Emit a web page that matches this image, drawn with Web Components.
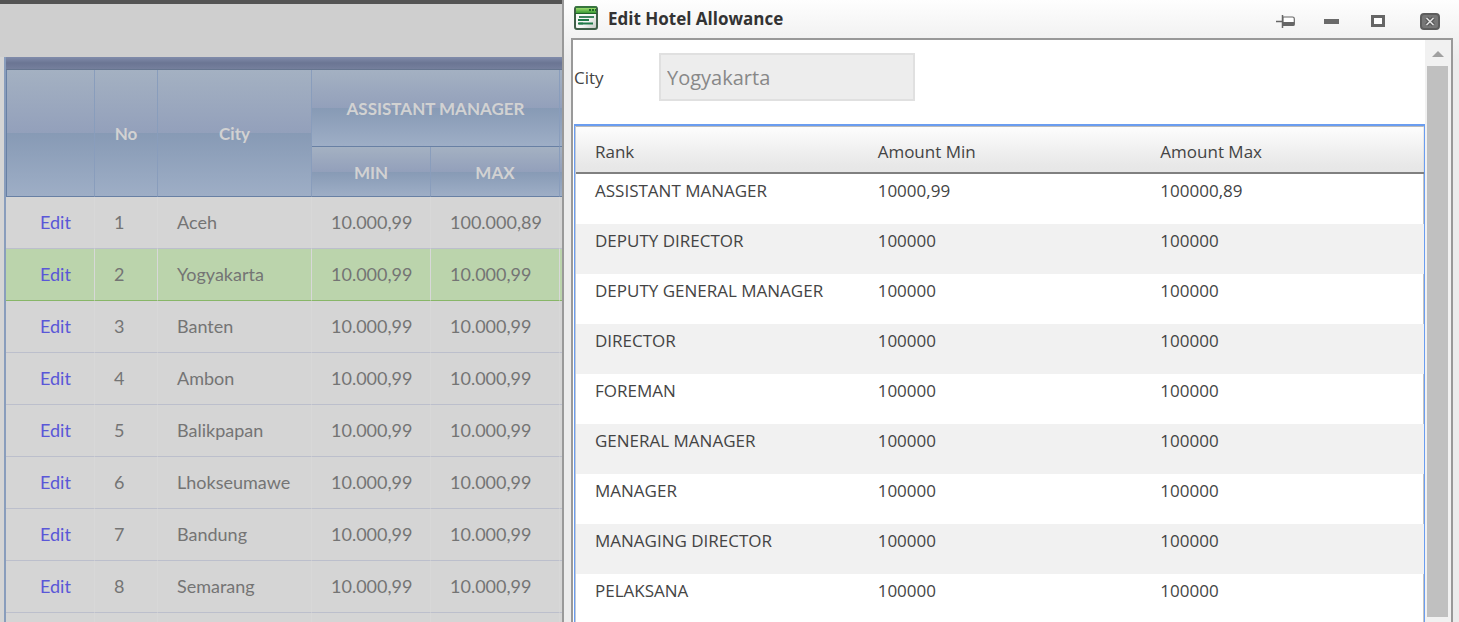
<!DOCTYPE html>
<html lang="en">
<head>
<meta charset="utf-8">
<title>Edit Hotel Allowance</title>
<style>
  html, body { margin: 0; height: 100%; overflow: hidden; }
  body { background: #cfcfcf; }
</style>
</head>
<body>
<hotel-app></hotel-app>

<template id="app-tpl">
  <style>
    :host { display: grid; grid-template-columns: minmax(0, 562fr) minmax(0, 897fr); height: 100vh; overflow: hidden; }
    .page { border-top: 4px solid #545454; padding-top: 53px; background: #cfcfcf; overflow: hidden; }
  </style>
  <main class="page"><city-table></city-table></main>
  <window-frame caption="Edit Hotel Allowance">
    <city-field></city-field>
    <rank-grid></rank-grid>
  </window-frame>
</template>

<template id="city-tpl">
  <style>
    :host { display: block; overflow: hidden; background: #d5d5d5; padding-left: 4px; font: 18px/20px Lato, "Liberation Sans", sans-serif; color: #747474; }
    .frame { border-left: 2px solid #899dbc; width: 720px; }
    .bar { height: 13px; box-sizing: border-box; border-bottom: 1px solid #66758f; background: linear-gradient(#818cab, #6b7593 50%, #757f9c); }
    table { table-layout: fixed; width: 100%; border-collapse: separate; border-spacing: 0; }
    th, td { box-sizing: border-box; padding: 0 0 2px 19px; text-align: left; }
    th { padding: 2px 0 0; text-align: center; font-size: 17px; font-weight: 700; color: #d2d2d2; border-right: 1px solid #899dbc; border-bottom: 1px solid #6880a4;
         background: linear-gradient(#a4b1c2, #93a0bb 50%, #879ab5 50%, #9eaec6); }
    tr.top th { height: 77px; }
    tr.sub th { height: 50px; }
    thead .first { box-shadow: inset 1px 0 #6880a4; }
    td { height: 52px; border-bottom: 1px solid #bcbfcc; border-right: 1px solid #d8d8d8; }
    td:first-child { padding-left: 34px; }
    tr.on td { background: #bbd4ac; border-bottom-color: #88b668; }
    a { color: #5a57d8; text-decoration: none; }
  </style>
  <div class="frame">
    <div class="bar"></div>
    <table>
      <colgroup><col style="width:89px"><col style="width:63px"><col style="width:154px"><col style="width:119px"><col style="width:129px"><col></colgroup>
      <thead>
        <tr class="top"><th class="first" rowspan="2"></th><th rowspan="2">No</th><th rowspan="2">City</th><th colspan="2">ASSISTANT MANAGER</th><th></th></tr>
        <tr class="sub"><th>MIN</th><th>MAX</th><th></th></tr>
      </thead>
      <tbody></tbody>
    </table>
  </div>
</template>

<template id="window-tpl">
  <style>
    :host { display: flex; flex-direction: column; min-height: 0; box-sizing: border-box; height: 100vh; padding: 0 6px 0 7px; border-left: 2px solid #999;
            background: linear-gradient(#fefefe, #f2f2f2 38px, #ececec 60px); font-family: "Open Sans", "Noto Sans", sans-serif; color: #333; }
    header { display: flex; align-items: center; height: 38px; flex: none; padding-left: 3px; }
    h1 { margin: 0 auto 0 8px; font-size: 17px; line-height: 24px; font-weight: 700; }
    header > svg { width: 26px; height: 26px; flex: none; }
    .tools { display: flex; gap: 24px; padding: 6px 12px 0 0; }
    .tools button:last-child { margin-left: 6px; }
    button { display: block; padding: 0; border: 0; background: none; width: 22px; height: 20px; }
    button svg { display: block; }
    .body { flex: 1; min-height: 0; display: flex; border: 2px solid #999; border-bottom: 0; background: #fff; overflow: hidden; }
    .content { flex: 1; min-width: 0; padding: 13px 0 0 1px; overflow: hidden; }
  </style>
  <header>
    <svg viewBox="0 0 26 26" aria-hidden="true">
      <defs>
        <linearGradient id="g" x2="0" y2="1"><stop stop-color="#9bdc6c"/><stop offset="1" stop-color="#3a9a35"/></linearGradient>
        <linearGradient id="w" x2="1" y2="1"><stop stop-color="#fff"/><stop offset=".6" stop-color="#f4f6f4"/><stop offset="1" stop-color="#bcc4bc"/></linearGradient>
      </defs>
      <rect x="1" y="1" width="22" height="22" rx="2" fill="url(#w)" stroke="#3f5f48" stroke-width="2"/>
      <path d="M2 2h20v5H2z" fill="url(#g)"/>
      <path d="M1 1h22" stroke="#2f8a34" stroke-width="1"/>
      <path d="M1 7.500h22" stroke="#20642a" stroke-width="1"/>
      <path d="M15 4h2M18 4h2M21 4h1" stroke="#1f6b28" stroke-width="2"/>
      <path d="M5 11h15M5 17.500h4" stroke="#3f8560" stroke-width="2"/>
      <path d="M4 14h11M4 17.500h15" stroke="#1f7a48" stroke-width="2"/>
    </svg>
    <h1></h1>
    <div class="tools">
      <button aria-label="Pin"><svg width="22" height="20" viewBox="0 0 22 20"><path d="M1 9.500h6" stroke="#666" stroke-width="1.500"/><path d="M7.500 3v13" stroke="#666" stroke-width="1.500"/><path d="M8 5h9.500q1.800 0 1.800 1.800v5.400q0 1.300-1.800 1.300H8z" fill="#fff" stroke="#666" stroke-width="1.200"/><path d="M8 10h11.300v3.500H8z" fill="#666"/></svg></button>
      <button aria-label="Minimize"><svg width="22" height="20"><path d="M3 7h15v5H3z" fill="#6a6a6a"/></svg></button>
      <button aria-label="Maximize"><svg width="22" height="20"><path d="M5.500 4.500h11v9h-11z" fill="#fff" stroke="#666" stroke-width="3"/></svg></button>
      <button aria-label="Close"><svg width="22" height="20"><rect x="2" y="2" width="18" height="15" rx="3" fill="#777" stroke="#5c5c5c" stroke-width="2"/><path d="M7.500 6l7 7M14.500 6l-7 7" stroke="#5a5a5a" stroke-width="4"/><path d="M7.500 6l7 7M14.500 6l-7 7" stroke="#e4e4e4" stroke-width="1.500"/></svg></button>
    </div>
  </header>
  <div class="body">
    <div class="content"><slot></slot></div>
    <scroll-rail></scroll-rail>
  </div>
</template>

<template id="rail-tpl">
  <style>
    :host { display: flex; flex-direction: column; box-sizing: border-box; width: 26px; padding: 0 3px 5px 2px; background: #f1f1f1; flex: none; }
    button { box-sizing: border-box; height: 26px; flex: none; border: 0; padding: 2px 0 0; background: none; display: grid; place-items: center; }
    .thumb { flex: 1; background: #c0c0c0; }
  </style>
  <button aria-label="Scroll up"><svg width="12" height="6"><path d="M0 6l6-6 6 6z" fill="#a0a0a0"/></svg></button>
  <div class="thumb"></div>
</template>

<template id="field-tpl">
  <style>
    :host { display: flex; align-items: center; margin-bottom: 23px; }
    label { width: 85px; padding-top: 2px; font-size: 17px; line-height: 24px; color: #444; }
    input { box-sizing: border-box; width: 256px; height: 48px; margin: 0; padding: 0 6px; border: 2px solid #e0e0e0; border-radius: 0; background: #ededed;
            font: 20px/28px "Open Sans", "Noto Sans", sans-serif; color: #888; }
  </style>
  <label for="city">City</label>
  <input id="city" value="Yogyakarta" readonly>
</template>

<template id="grid-tpl">
  <style>
    :host { display: block; height: 600px; border: 1px solid #6a9df0; border-top-width: 2px; box-shadow: inset 1px 0 #c4cad4, inset -1px 0 #c4c4c4, inset 0 1px #bbb; padding: 1px 0 0 1px; }
    table { width: 100%; table-layout: fixed; border-collapse: separate; border-spacing: 0; font-size: 17px; line-height: 24px; color: #444; }
    th, td { box-sizing: border-box; text-align: left; font-weight: 400; padding: 0 0 0 19px; }
    th { height: 47px; padding-top: 4px; border-bottom: 2px solid #808080; }
    thead { background: linear-gradient(#fdfdfd, #e8e8e8 80%, #e6e6e6); }
    td { height: 50px; vertical-align: top; padding-top: 5px; }
    tbody tr:nth-child(even) { background: #f1f1f1; }
  </style>
  <table>
    <thead><tr><th>Rank</th><th>Amount Min</th><th>Amount Max</th></tr></thead>
    <tbody></tbody>
  </table>
</template>

<script>
  const stamp = (host, id) => {
    const root = host.attachShadow({ mode: 'open' });
    root.append(document.getElementById(id).content.cloneNode(true));
    return root;
  };
  const cities = ['Aceh', 'Yogyakarta', 'Banten', 'Ambon', 'Balikpapan', 'Lhokseumawe', 'Bandung', 'Semarang'];
  const ranks = ['ASSISTANT MANAGER', 'DEPUTY DIRECTOR', 'DEPUTY GENERAL MANAGER', 'DIRECTOR', 'FOREMAN', 'GENERAL MANAGER', 'MANAGER', 'MANAGING DIRECTOR', 'PELAKSANA'];

  customElements.define('city-table', class extends HTMLElement {
    constructor() {
      super();
      stamp(this, 'city-tpl').querySelector('tbody').innerHTML = cities.map((c, i) =>
        `<tr${i === 1 ? ' class="on"' : ''}><td><a href="#edit">Edit</a></td><td>${i + 1}</td><td>${c}</td><td>10.000,99</td><td>${i ? '10.000,99' : '100.000,89'}</td><td></td></tr>`
      ).join('') + '<tr>' + '<td></td>'.repeat(6) + '</tr>';
    }
  });
  customElements.define('scroll-rail', class extends HTMLElement {
    constructor() { super(); stamp(this, 'rail-tpl'); }
  });
  customElements.define('city-field', class extends HTMLElement {
    constructor() { super(); stamp(this, 'field-tpl'); }
  });
  customElements.define('rank-grid', class extends HTMLElement {
    constructor() {
      super();
      stamp(this, 'grid-tpl').querySelector('tbody').innerHTML = ranks.map((r, i) =>
        `<tr><td>${r}</td><td>${i ? '100000' : '10000,99'}</td><td>${i ? '100000' : '100000,89'}</td></tr>`).join('');
    }
  });
  customElements.define('window-frame', class extends HTMLElement {
    constructor() { super(); stamp(this, 'window-tpl'); }
    connectedCallback() { this.shadowRoot.querySelector('h1').textContent = this.getAttribute('caption'); }
  });
  customElements.define('hotel-app', class extends HTMLElement {
    constructor() { super(); stamp(this, 'app-tpl'); }
  });
</script>
</body>
</html>
